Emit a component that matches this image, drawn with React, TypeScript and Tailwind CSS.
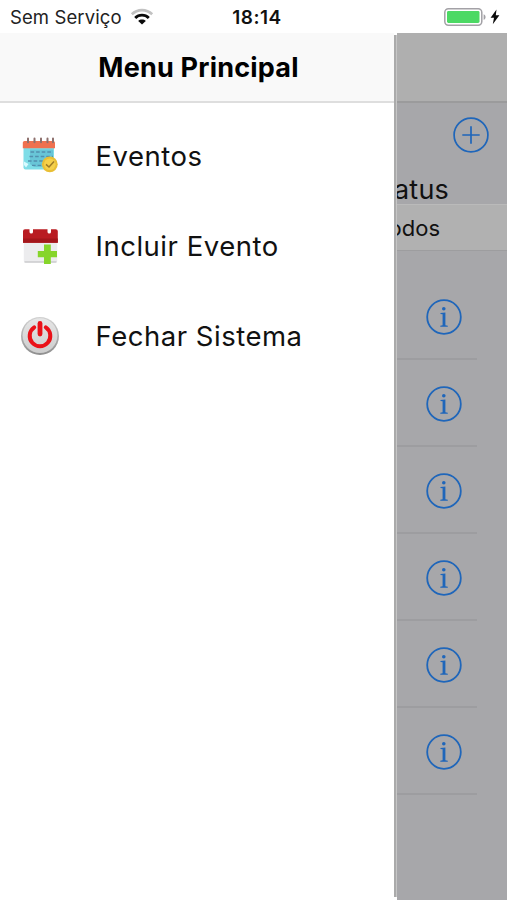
import React from "react";

const events = [1, 2, 3, 4, 5, 6];

function WifiIcon() {
  return (
    <svg width="24" height="18" viewBox="0 0 24 18" fill="none">
      <path d="M1.8 6.3C7.5 0.7 16.5 0.7 22.2 6.3" stroke="#c2c2c2" strokeWidth="2.6" />
      <path d="M5.2 9.9C9 6.1 15 6.1 18.8 9.9" stroke="#0a0a0a" strokeWidth="2.8" />
      <path d="M12 16.6L8.2 12.9C10.2 11 13.8 11 15.8 12.9Z" fill="#0a0a0a" />
    </svg>
  );
}

function BatteryIcon() {
  return (
    <svg width="43" height="18" viewBox="0 0 43 18">
      <rect x="0.8" y="0.8" width="37" height="16.4" rx="3.6" fill="#fff" stroke="#a3a1a6" strokeWidth="1.5" />
      <rect x="3" y="3" width="32.5" height="12" rx="1.4" fill="#4cd964" />
      <path d="M39.6 6.2C42.2 7 42.2 11 39.6 11.8Z" fill="#a3a1a6" />
    </svg>
  );
}

function BoltIcon() {
  return (
    <svg width="10" height="16" viewBox="0 0 10 16">
      <path d="M6.5 0.5L0.6 8.8H4L2.8 15.3L9.4 6.3H5.8Z" fill="#0a0a0a" />
    </svg>
  );
}

function CalendarCheckIcon() {
  return (
    <svg width="40" height="40" viewBox="0 0 40 40">
      <path d="M3.5 11H34V33.5H5.5Q3.5 33.5 3.5 31.5Z" fill="#7fdde7" />
      <path d="M10 13.5H33V27L27 31H14L10 28Z" fill="#68c5d7" />
      <g stroke="#528fae" strokeWidth="1.3" strokeDasharray="3.6 2">
        <path d="M10.5 16H33M9.5 20.5H33M8 25H26M12 29.4H22" />
      </g>
      <path d="M4 25.5L8.5 28L6 31.5L4 29Z" fill="#d9fbff" />
      <path d="M2.8 6.8Q2.8 5 4.5 5H33Q35 5 35 6.8V12.3H2.8Z" fill="#ef7150" />
      <g stroke="#8e706d" strokeWidth="2" strokeLinecap="round">
        <path d="M8 2.5V6.3M14.5 2.5V6.3M21 2.5V6.3M27.5 2.5V6.3M33 2.5V6.3" />
      </g>
      <circle cx="29.8" cy="28.3" r="7.9" fill="#e9bf35" />
      <circle cx="29.8" cy="28.3" r="5.8" fill="#f5d04a" />
      <path d="M26 28.4L29 31L34 25.5" fill="none" stroke="#9d7b26" strokeWidth="1.5" />
    </svg>
  );
}

function CalendarAddIcon() {
  return (
    <svg width="40" height="40" viewBox="0 0 40 40">
      <path d="M3.8 14H37.2V34.5Q37.2 36.5 35.2 36.5H5.8Q3.8 36.5 3.8 34.5Z" fill="#ececee" />
      <path d="M4.5 36H36.5" stroke="#b9b9bb" strokeWidth="1.2" />
      <path
        d="M3 16.8V5.2Q3 3.3 5 3.3H9.5V6Q9.5 7.5 11.3 7.5Q13 7.5 13 6V3.3H27.5V6Q27.5 7.5 29.3 7.5Q31 7.5 31 6V3.3H35.7Q37.8 3.3 37.8 5.2V16.8Z"
        fill="#b91c22"
      />
      <path d="M3 12.5H37.8V16.8H3Z" fill="#a3161b" />
      <path d="M24 18.5H30.8V25H37V31.2H30.8V38H24V31.2H17.8V25H24Z" fill="#86d52b" />
    </svg>
  );
}

function PowerIcon() {
  return (
    <svg width="40" height="40" viewBox="0 0 40 40">
      <defs>
        <linearGradient id="rim" x1="0" y1="0" x2="0" y2="1">
          <stop offset="0" stopColor="#d2d2d2" />
          <stop offset="1" stopColor="#8e8e8e" />
        </linearGradient>
        <linearGradient id="face" x1="0" y1="0" x2="0" y2="1">
          <stop offset="0" stopColor="#e6e6e6" />
          <stop offset="1" stopColor="#cdcdcd" />
        </linearGradient>
      </defs>
      <circle cx="20" cy="20" r="19" fill="url(#rim)" />
      <circle cx="20" cy="19.6" r="17.4" fill="url(#face)" />
      <path d="M14.2 11.4A10.3 10.3 0 1 0 25.8 11.4" fill="none" stroke="#ea1219" strokeWidth="4" strokeLinecap="round" />
      <path d="M20 7.4V18" stroke="#ea1219" strokeWidth="4.8" strokeLinecap="round" />
    </svg>
  );
}

function AddCircleIcon() {
  return (
    <svg width="36" height="36" viewBox="0 0 36 36" fill="none" stroke="#1f66ba" strokeWidth="1.7">
      <circle cx="18" cy="18" r="16.9" />
      <path d="M18 9.3V26.7M9.3 18H26.7" />
    </svg>
  );
}

function InfoIcon() {
  return (
    <svg width="36" height="36" viewBox="0 0 36 36">
      <circle cx="18" cy="18" r="16.8" fill="none" stroke="#1f66ba" strokeWidth="1.8" />
      <circle cx="17.8" cy="9.8" r="1.8" fill="#1f66ba" />
      <path d="M14.5 13.9L19.4 13.4V26.2L21.8 26.7V27.7H14.3V26.7L16.6 26.2V15.3L14.5 14.9Z" fill="#1f66ba" />
    </svg>
  );
}

const menuItems = [
  { label: "Eventos", icon: <CalendarCheckIcon /> },
  { label: "Incluir Evento", icon: <CalendarAddIcon /> },
  { label: "Fechar Sistema", icon: <PowerIcon /> },
];

export default function App() {
  return (
    <div className="flex h-[900px] w-[507px] flex-col overflow-hidden bg-white font-['Inter',sans-serif] text-[#111]">
      <header className="grid h-[33px] shrink-0 grid-cols-3 items-center pt-px">
        <div className="flex items-center gap-[8.5px] pl-[10px]">
          <span className="whitespace-nowrap text-[18.5px] leading-6 tracking-[0.1px] text-[#222]">Sem Serviço</span>
          <WifiIcon />
        </div>
        <span className="pl-[7px] pt-px text-center text-[19px] font-semibold leading-6 tracking-[0.5px]">18:14</span>
        <div className="flex items-center justify-end gap-[3px] pr-[7px]">
          <BatteryIcon />
          <BoltIcon />
        </div>
      </header>

      <div className="flex min-h-0 flex-1">
        <nav className="w-[394px] shrink-0 bg-white">
          <div className="flex h-[70px] items-center justify-center border-b-2 border-[#dedede] bg-[#f9f9f9] pl-[3px] pt-px">
            <h1 className="text-[27px] font-bold leading-8 tracking-[0.2px] text-black">Menu Principal</h1>
          </div>
          <ul className="pt-[8px]">
            {menuItems.map((item) => (
              <li key={item.label} className="flex h-[90px] items-center pl-5">
                <span className="w-[75.5px] shrink-0">{item.icon}</span>
                <span className="whitespace-nowrap text-[27.5px] leading-8 tracking-[0.52px]">{item.label}</span>
              </li>
            ))}
          </ul>
        </nav>

        <div className="mb-[3px] mt-[2px] w-[3px] shrink-0 border-l-2 border-[#aaa] bg-[#c6c6c6]" />

        <main className="min-w-0 flex-1 overflow-hidden bg-[#a7a7aa]">
          <div className="h-[70px] border-b-2 border-[#9b9b9c] bg-[#afafaf]" />
          <div className="flex h-[101px] flex-col items-end justify-between pr-[18px] pt-[14px]">
            <AddCircleIcon />
            <span className="mr-[40px] text-[27px] leading-[29px] tracking-[0.2px]">Status</span>
          </div>
          <div className="flex h-[47px] items-center justify-end border-y border-t-[#bababa] border-b-[#9d9d9f] bg-[#b1b1b1] pr-[67px]">
            <span className="text-[22px] leading-7">Todos</span>
          </div>
          <ul className="mr-[30px] pt-[22px]">
            {events.map((id) => (
              <li key={id} className="flex h-[87px] items-center justify-end border-b-2 border-[#9d9da0] pr-[15px] pt-[2px]">
                <InfoIcon />
              </li>
            ))}
          </ul>
        </main>
      </div>
    </div>
  );
}
